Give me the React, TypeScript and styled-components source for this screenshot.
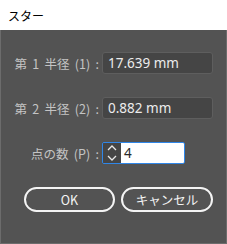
import { createGlobalStyle, styled } from "styled-components";

const Global = createGlobalStyle`
  html, body {
    margin: 0;
    padding: 0;
    background: #535353;
  }
  body {
    font-family: "Noto Sans CJK JP", "Noto Sans", sans-serif;
  }
`;

const Window = styled.div`
  width: 227px;
  height: 244px;
  box-sizing: border-box;
  display: flex;
  flex-direction: column;
  background: #535353;
  border: 1px solid #6c6c6c;
  border-top: none;
`;

const TitleBar = styled.div`
  height: 30px;
  flex-shrink: 0;
  display: flex;
  align-items: center;
  padding-left: 8px;
  background: #ffffff;
  margin: 0 -1px;
  color: #000000;
  font-size: 12px;
`;

const Form = styled.div`
  display: flex;
  flex-direction: column;
  gap: 23px;
  padding: 22px 13px 0 0;
`;

const Row = styled.div`
  display: flex;
  justify-content: flex-end;
  align-items: center;
  height: 22px;
`;

const Label = styled.span`
  color: #c4c4c4;
  font-size: 12.5px;
  word-spacing: 2.5px;
  margin-right: 3px;
  white-space: pre;
`;

const Field = styled.div<{ $width: number }>`
  width: ${(p) => p.$width}px;
  height: 22px;
  box-sizing: border-box;
  display: flex;
  align-items: center;
  padding-left: 5px;
  background: #454545;
  border: 1px solid #5e5e5e;
  border-radius: 3px;
  color: #ececec;
  font-family: "Noto Sans", sans-serif;
  font-size: 13.5px;
`;

const SpinField = styled.div`
  width: 83px;
  height: 22px;
  box-sizing: border-box;
  display: flex;
  border: 1.5px solid #2f86e8;
  border-radius: 2px;
  overflow: hidden;
  margin-right: 28px;
`;

const Spinner = styled.div`
  width: 18px;
  display: flex;
  align-items: center;
  justify-content: center;
  background: #454545;
`;

const SpinInput = styled.div`
  flex: 1;
  display: flex;
  align-items: center;
  padding-left: 3px;
  background: #ffffff;
  color: #2a2a2a;
  font-family: "Noto Sans", sans-serif;
  font-size: 13.5px;
`;

const Buttons = styled.div`
  display: flex;
  justify-content: flex-end;
  gap: 6px;
  height: 25px;
`;

const Button = styled.div<{ $width: number }>`
  width: ${(p) => p.$width}px;
  height: 25px;
  box-sizing: border-box;
  display: flex;
  align-items: center;
  justify-content: center;
  border: 2px solid #f4f4f4;
  border-radius: 13px;
  color: #f4f4f4;
  font-size: 12.5px;
`;

export default function App() {
  return (
    <>
      <Global />
      <Window>
        <TitleBar>スター</TitleBar>
        <Form>
          <Row>
            <Label>第 1 半径 (1) :</Label>
            <Field $width={111}>17.639 mm</Field>
          </Row>
          <Row>
            <Label>第 2 半径 (2) :</Label>
            <Field $width={111}>0.882 mm</Field>
          </Row>
          <Row>
            <Label>点の数 (P) :</Label>
            <SpinField>
              <Spinner>
                <svg width="12" height="18" viewBox="0 0 12 18" fill="none" stroke="#e8e8e8" strokeWidth="1.3">
                  <path d="M2 6 L6 2 L10 6" />
                  <path d="M2 12 L6 16 L10 12" />
                </svg>
              </Spinner>
              <SpinInput>4</SpinInput>
            </SpinField>
          </Row>
          <Buttons>
            <Button $width={91}>OK</Button>
            <Button $width={92}>キャンセル</Button>
          </Buttons>
        </Form>
      </Window>
    </>
  );
}
